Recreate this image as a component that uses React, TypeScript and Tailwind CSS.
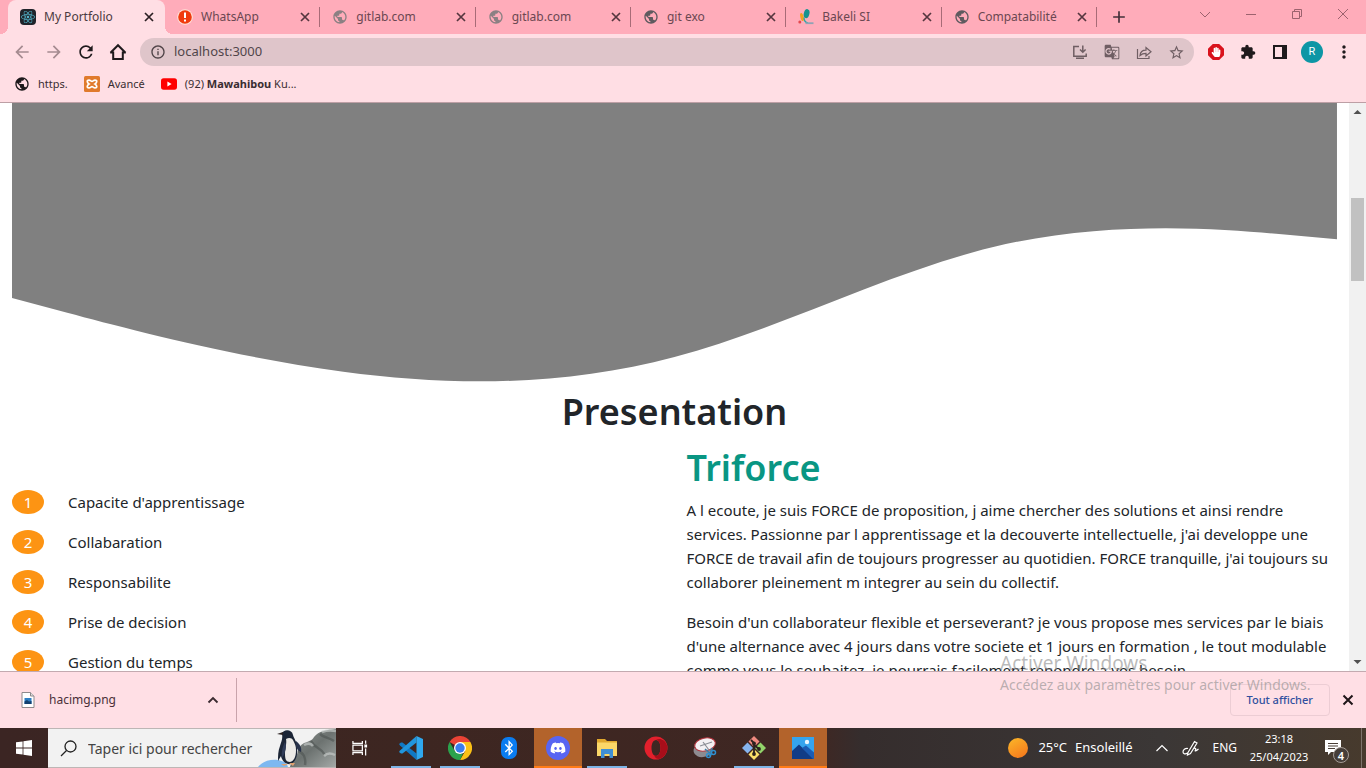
import type { ReactNode } from "react";
import {
  MdArrowBack,
  MdArrowForward,
  MdRefresh,
  MdPublic,
  MdExtension,
  MdGTranslate,
  MdStarBorder,
  MdAdd,
  MdInfoOutline,
  MdMoreVert,
} from "react-icons/md";
import { FaReact, FaDiscord, FaBluetoothB, FaHandPaper } from "react-icons/fa";

type Tab = { title: string; icon: ReactNode };

function CloseIcon() {
  return (
    <svg viewBox="0 0 10 10" className="size-2.5" fill="none" stroke="currentColor" strokeWidth="1.700">
      <path d="M1 1l8 8M9 1L1 9" />
    </svg>
  );
}

function BakeliIcon() {
  return (
    <svg viewBox="0 0 16 16" className="size-4">
      <ellipse cx="8.600" cy="4.600" rx="2.800" ry="4.600" transform="rotate(14 8.600 4.600)" fill="#17938f" />
      <ellipse cx="4" cy="8" rx="1.600" ry="4.200" transform="rotate(-14 4 8)" fill="#f7a01f" />
      <circle cx="1.800" cy="13" r="1.500" fill="#e5484d" />
      <path d="M6 8.500c0 3 1.500 5 4 5.500" fill="none" stroke="#2aa7a3" strokeWidth="1.300" />
      <path d="M7.500 13.300h8v1.800h-8z" fill="#8fa3b5" />
    </svg>
  );
}

function AlertIcon() {
  return (
    <svg viewBox="0 0 16 16" className="size-4">
      <circle cx="8" cy="8" r="7.800" fill="#ffe3d8" />
      <circle cx="8" cy="8" r="6.800" fill="#f03a0e" />
      <path d="M7 3.500h2v5.500H7zM7 10.500h2v2H7z" fill="#fff" />
    </svg>
  );
}

const tabs: Tab[] = [
  { title: "WhatsApp", icon: <AlertIcon /> },
  { title: "gitlab.com", icon: <MdPublic className="size-4 text-[#8b8083]" /> },
  { title: "gitlab.com", icon: <MdPublic className="size-4 text-[#8b8083]" /> },
  { title: "git exo", icon: <MdPublic className="size-4 text-[#5f5a5f]" /> },
  { title: "Bakeli SI", icon: <BakeliIcon /> },
  { title: "Compatabilité", icon: <MdPublic className="size-4 text-[#5f5a5f]" /> },
];

function TabStrip() {
  return (
    <div className="flex h-[34px] shrink-0 bg-[#ffacba] pl-2">
      <div className="relative flex w-[157px] items-center rounded-t-lg bg-[#ffdee4] pr-2 pl-3">
        <span className="absolute bottom-0 -left-2 size-2 bg-[radial-gradient(circle_at_0_0,#ffacba_8px,#ffdee4_8px)]" />
        <span className="absolute -right-2 bottom-0 size-2 bg-[radial-gradient(circle_at_100%_0,#ffacba_8px,#ffdee4_8px)]" />
        <span className="flex size-4 items-center justify-center rounded-sm bg-[#20232a]">
          <FaReact className="size-3.5 text-[#53b4cb]" />
        </span>
        <button className="flex-1 pl-2 text-left text-[#4b3a40]">My Portfolio</button>
        <button aria-label="Fermer" className="flex size-4 items-center justify-center text-[#2b1f23]">
          <CloseIcon />
        </button>
      </div>
      <div className="flex max-w-[932px] flex-1 items-center">
        {tabs.map((tab, i) => (
          <div key={i} className="flex h-5 min-w-0 flex-1 items-center border-r border-[#a86b77] pr-[6px] pl-3">
            <span className="size-4 shrink-0">{tab.icon}</span>
            <button className="min-w-0 flex-1 truncate pl-2 text-left text-[#6b4751]">{tab.title}</button>
            <button aria-label="Fermer" className="flex size-4 items-center justify-center text-[#55363f]">
              <CloseIcon />
            </button>
          </div>
        ))}
      </div>
      <button aria-label="Nouvel onglet" className="ml-3 text-[#43303a]">
        <MdAdd className="size-5" />
      </button>
      <div className="ml-auto flex h-7 text-[#9c626e]">
        {[
          "M1 4l5 5 5-5",
          "M1 6.500h10",
          "M1.500 3.500h7v7h-7zM3.500 3.500v-2h7v7h-2",
          "M1 1l10 10M11 1L1 11",
        ].map((d, i) => (
          <button key={i} aria-label={["Rechercher", "Réduire", "Agrandir", "Fermer"][i]} className="flex w-[46px] items-center justify-center">
            <svg viewBox="0 0 12 12" className="size-3" fill="none" stroke="currentColor">
              <path d={d} />
            </svg>
          </button>
        ))}
      </div>
    </div>
  );
}

function ToolButton({ label, children }: { label: string; children: ReactNode }) {
  return (
    <button aria-label={label} className="flex w-8 shrink-0 items-center justify-center">
      {children}
    </button>
  );
}

function Toolbar() {
  return (
    <div className="flex h-9 shrink-0 items-stretch px-[6px]">
      <div className="flex text-[#a58b90]">
        <ToolButton label="Précédent"><MdArrowBack className="size-5" /></ToolButton>
        <ToolButton label="Suivant"><MdArrowForward className="size-5" /></ToolButton>
      </div>
      <div className="flex text-[#1f1a1c]">
        <ToolButton label="Actualiser"><MdRefresh className="size-5" /></ToolButton>
        <ToolButton label="Accueil">
          <svg viewBox="0 0 18 18" className="size-[18px]" fill="none" stroke="currentColor" strokeWidth="2">
            <path d="M1.500 9.800L9 2.200l7.500 7.600M1.200 9.500H4.200V16h9.600V9.500h3" />
          </svg>
        </ToolButton>
      </div>
      <div className="my-1 mr-[6px] ml-[6px] flex min-w-0 flex-1 items-center rounded-full bg-[#dfc5ca] pr-[2px] pl-[10px] text-[#6f5e63]">
        <MdInfoOutline className="size-4 shrink-0 text-[#4f4347]" />
        <input aria-label="Adresse" defaultValue="localhost:3000" className="min-w-0 flex-1 bg-transparent pl-2 text-[13px] text-[#51454a] outline-none" />
        <ToolButton label="Installer">
          <svg viewBox="0 0 16 16" className="size-4" fill="none" stroke="currentColor" strokeWidth="1.500">
            <path d="M7 2.500H1.800v9.700h12.400V9.500M4 14.200h8M10.800 1.500v6.500M8 5.500l2.800 2.800 2.800-2.800" />
          </svg>
        </ToolButton>
        <ToolButton label="Traduire"><MdGTranslate className="size-4" /></ToolButton>
        <ToolButton label="Partager">
          <svg viewBox="0 0 16 16" className="size-4" fill="none" stroke="currentColor" strokeWidth="1.200">
            <path d="M1.500 5v9.500h11.500v-2.500M4 11.500c.3-3.500 2.500-5.300 6-5.300V3.500l5 4.300-5 4.200V9.300C7.300 9.300 5.500 10 4 11.500z" />
          </svg>
        </ToolButton>
        <ToolButton label="Favori"><MdStarBorder className="size-[17px]" /></ToolButton>
      </div>
      <div className="flex text-[#1f1a1c]">
        <ToolButton label="Bloqueur">
          <span className="flex size-4 items-center justify-center bg-[#d9121c] [clip-path:polygon(30%_0,70%_0,100%_30%,100%_70%,70%_100%,30%_100%,0_70%,0_30%)]">
            <FaHandPaper className="size-2.5 text-white" />
          </span>
        </ToolButton>
        <ToolButton label="Extensions"><MdExtension className="size-4" /></ToolButton>
        <ToolButton label="Panneau latéral">
          <svg viewBox="0 0 14 14" className="size-3.5">
            <path fillRule="evenodd" d="M0 0h14v14H0zM2 2v10h7V2z" fill="currentColor" />
          </svg>
        </ToolButton>
        <ToolButton label="Profil">
          <span className="flex size-[22px] items-center justify-center rounded-full bg-[#0d96a5] font-[Roboto] text-[11px] text-white">R</span>
        </ToolButton>
        <ToolButton label="Menu"><MdMoreVert className="size-5" /></ToolButton>
      </div>
    </div>
  );
}

function Bookmarks() {
  return (
    <nav className="flex h-[33px] shrink-0 items-center gap-4 border-b border-[#bd9fa5] pb-1 pl-[14px] text-[11px] text-[#3a2d31]">
      <a href="#https" className="flex items-center gap-2">
        <MdPublic className="size-4 text-[#1d191b]" />
        https.
      </a>
      <a href="#avance" className="flex items-center gap-2">
        <svg viewBox="0 0 16 16" className="size-4">
          <rect width="16" height="16" rx="1.500" fill="#e07a2c" />
          <path d="M5 4.200c-3 0-1.500 3 0 3.800-1.500.8-3 3.800 0 3.800 1.600 0 2-1.200 3-1.200s1.400 1.200 3 1.200c3 0 1.500-3 0-3.800 1.500-.8 3-3.800 0-3.800-1.600 0-2 1.200-3 1.200S6.600 4.200 5 4.200z" fill="none" stroke="#fff" strokeWidth="1.700" />
        </svg>
        Avancé
      </a>
      <a href="#youtube" className="flex items-center gap-2">
        <svg viewBox="0 0 16 16" className="size-4">
          <rect y="2.300" width="16" height="11.400" rx="2.600" fill="#f00" />
          <path d="M6.400 5.600v4.800L10.600 8z" fill="#fff" />
        </svg>
        <span>(92) <b>Mawahibou</b> Ku...</span>
      </a>
    </nav>
  );
}

const skills = ["Capacite d'apprentissage", "Collabaration", "Responsabilite", "Prise de decision", "Gestion du temps"];

function Portfolio() {
  return (
    <main className="h-full min-w-0 flex-1 overflow-hidden bg-white px-3 text-[15px] leading-6 text-[#212529]">
      <svg viewBox="0 12 1440 308" className="block w-full">
        <path
          fill="#808080"
          d="M0,224L60,240C120,256,240,288,360,304C480,320,600,320,720,288C840,256,960,192,1080,165.300C1200,139,1320,149,1380,154.700L1440,160L1440,0L0,0Z"
        />
      </svg>
      <h1 className="mb-1 text-center text-[36px] leading-[52px] font-semibold">Presentation</h1>
      <div className="grid grid-cols-2 gap-6">
        <ul className="mt-12">
          {skills.map((skill, i) => (
            <li key={skill} className="mb-4 flex gap-6">
              <span className="w-8 rounded-[50%] bg-[#fd9413] text-center text-white">{i + 1}</span>
              {skill}
            </li>
          ))}
        </ul>
        <section>
          <h2 className="mb-1 text-[36px] leading-[52px] font-semibold text-[#099683]">Triforce</h2>
          <p className="mb-4">
            A l ecoute, je suis FORCE de proposition, j aime chercher des solutions et ainsi rendre services. Passionne par l apprentissage et la decouverte intellectuelle, j'ai developpe une FORCE de travail afin de toujours progresser au quotidien. FORCE tranquille, j'ai toujours su collaborer pleinement m integrer au sein du collectif.
          </p>
          <p>
            Besoin d'un collaborateur flexible et perseverant? je vous propose mes services par le biais d'une alternance avec 4 jours dans votre societe et 1 jours en formation , le tout modulable comme vous le souhaitez, je pourrais facilement repondre a vos besoin.
          </p>
        </section>
      </div>
    </main>
  );
}

function Scrollbar() {
  return (
    <div className="flex w-[17px] shrink-0 flex-col items-center bg-[#f1f1f1] text-[#505050]">
      <svg viewBox="0 0 17 17" className="size-[17px]"><path d="M4.500 11h8l-4-4z" fill="currentColor" /></svg>
      <div className="flex w-[13px] flex-1 flex-col pt-[78px]">
        <div className="h-[83px] bg-[#c1c1c1]" />
      </div>
      <svg viewBox="0 0 17 17" className="size-[17px]"><path d="M4.500 6h8l-4 4z" fill="currentColor" /></svg>
    </div>
  );
}

function DownloadBar() {
  return (
    <div className="flex h-[57px] shrink-0 items-center border-t border-[#c3aab0] bg-[#ffdfe5] pr-3 pl-5">
      <svg viewBox="0 0 14 16" className="size-4">
        <path d="M1 .5h8.500L13 4v11.500H1z" fill="#fff" stroke="#8f8a8c" />
        <path d="M9.500.5V4H13" fill="#ddd" stroke="#8f8a8c" />
        <path d="M3.500 6h7v6h-7z" fill="#2d7fc4" />
        <path d="M3.500 12V9.500L6 8l2 1.500L10.500 9v3z" fill="#12406f" />
      </svg>
      <button className="ml-[13px] w-[158px] text-left text-[12px] text-[#4a3038]">hacimg.png</button>
      <button aria-label="Options" className="mr-[17px] text-[#3a2a2f]">
        <svg viewBox="0 0 12 12" className="size-3" fill="none" stroke="currentColor" strokeWidth="1.800"><path d="M1.500 8.500L6 4l4.500 4.500" /></svg>
      </button>
      <span className="h-11 w-px bg-[#c9a3ab]" />
      <button className="ml-auto h-8 rounded border border-[#eccdd4] px-4 text-[11px] font-medium text-[#31509f]">Tout afficher</button>
      <button aria-label="Fermer" className="ml-3 text-[#1f1518]">
        <svg viewBox="0 0 12 12" className="size-3" fill="none" stroke="currentColor" strokeWidth="2">
          <path d="M1.500 1.500l9 9M10.500 1.500l-9 9" />
        </svg>
      </button>
    </div>
  );
}

function Penguin() {
  return (
    <svg viewBox="0 0 78 38" className="h-full w-[78px] shrink-0">
      <defs>
        <linearGradient id="rock" x1="0" y1="0" x2="1" y2="1">
          <stop offset="0" stopColor="#8f9492" />
          <stop offset=".5" stopColor="#6c7270" />
          <stop offset="1" stopColor="#a4a9a7" />
        </linearGradient>
      </defs>
      <path d="M32 38c2-10 8-10 8-17 4-10 12-6 16-13 5-6 12-7 22-8v38z" fill="url(#rock)" />
      <path d="M40 22c6 2 8 8 7 14M53 12c4 8 10 6 14 14M62 5c4 4 8 3 14 7" fill="none" stroke="#454b49" strokeWidth="2.500" opacity=".5" />
      <path d="M46 16c4-2 7-2 9 1M66 27c3-3 7-3 11-1M64 3c5-2 9-2 14-1" fill="none" stroke="#c3c8c6" strokeWidth="2.500" opacity=".7" />
      <path d="M0 38c4-5 11-8 20-7 5 1 9 3 10 7z" fill="#7db8f0" />
      <path d="M24 5c1-5 10-5 11 1 1 4 4 6 4 13 1 9-2 14-6 16-5 1-9-3-10-8l-3 5c0-5 0-10 2-15 1-4 3-7 2-12z" fill="#1c2536" />
      <path d="M28 10c3-2 6-1 7 1 2 4 3 6 3 10 0 7-2 11-6 12-4 0-5-3-5-8 0-6 2-10 1-15z" fill="#eceae6" />
      <path d="M27 13c-2 4-4 9-3 16 2-3 4-8 4-12z" fill="#303c57" />
      <path d="M38 12c4 3 6 7 5 11-3-1-4-3-5-6z" fill="#28324a" />
      <path d="M19 5l6-2v3z" fill="#2a2020" />
      <path d="M23 35h7l-4 2zM31 34h6l-2 3z" fill="#e0a070" />
    </svg>
  );
}

type TaskApp = { name: string; active?: boolean; running?: boolean; icon: ReactNode };

const apps: TaskApp[] = [
  {
    name: "Visual Studio Code",
    running: true,
    icon: (
      <svg viewBox="0 0 24 24" className="size-6">
        <path d="M17.500 24L1 9.500 0 8l2-1.600 1.500.1L17.500 17.500z" fill="#1079c4" />
        <path d="M17.500 6.500L3.500 17.500l-1.500.1L0 16l1-1.500L17.500 0z" fill="#2196dd" />
        <path d="M17.500 0L24 3v18l-6.500 3z" fill="#2fa8ee" />
      </svg>
    ),
  },
  {
    name: "Chrome",
    running: true,
    icon: (
      <svg viewBox="0 0 24 24" className="size-6">
        <path d="M12 12L1.600 6A12 12 0 0 1 22.400 6z" fill="#ea4335" />
        <path d="M12 12V6h10.400A12 12 0 0 1 12 24l5.200-9z" fill="#fbc116" />
        <path d="M1.600 6l5.200 9 5.200 3 3-.500L12 24A12 12 0 0 1 1.600 6z" fill="#2ba24c" />
        <circle cx="12" cy="12" r="6" fill="#fff" />
        <circle cx="12" cy="12" r="4.700" fill="#3b7ded" />
      </svg>
    ),
  },
  {
    name: "Bluetooth",
    icon: (
      <span className="flex h-[22px] w-4 items-center justify-center rounded-[7px] bg-[#0a7cf0]">
        <FaBluetoothB className="size-4 text-white" />
      </span>
    ),
  },
  {
    name: "Discord",
    active: true,
    icon: (
      <span className="flex size-6 items-center justify-center rounded-full bg-[#5865f2]">
        <FaDiscord className="size-4 text-white" />
      </span>
    ),
  },
  {
    name: "Explorateur",
    running: true,
    icon: (
      <svg viewBox="0 0 24 24" className="size-6">
        <path d="M2 3h8l2 2h10v15H2z" fill="#e0a82e" />
        <path d="M2 6.500h20V20H2z" fill="#fbd768" />
        <path d="M6 13h12v9h-3.500v-4h-5v4H6z" fill="#3f8fd4" />
      </svg>
    ),
  },
  {
    name: "Opera",
    icon: (
      <svg viewBox="0 0 24 24" className="size-6">
        <path fillRule="evenodd" d="M12 .500a11.500 11.500 0 1 0 0 23 11.500 11.500 0 1 0 0-23zM12 4c2.600 0 4.500 3.600 4.500 8s-1.900 8-4.500 8-4.500-3.600-4.500-8S9.400 4 12 4z" fill="#e2202c" />
        <path d="M12 4c3-2 9-1 11.300 6 .8 6-3.300 12-8.300 13-2 0-4-1-5-4 4 2.500 6.500-1.500 6.500-7S14.500 4 12 4z" fill="#a70e1a" />
      </svg>
    ),
  },
  {
    name: "Outil Capture",
    icon: (
      <svg viewBox="0 0 24 24" className="size-6">
        <ellipse cx="10" cy="11" rx="9.500" ry="7" fill="#8d8b90" transform="translate(0 3) rotate(-12 10 11)" />
        <ellipse cx="12" cy="8.500" rx="10.500" ry="6.500" transform="rotate(-12 12 8.500)" fill="#f3f1f3" stroke="#b3323c" />
        <path d="M7 10l12-4M10 6l6 8" stroke="#8b8f96" strokeWidth="1.200" />
        <path d="M12 13l7 6M19 12l-3 8" stroke="#3d7ea6" strokeWidth="1.500" />
        <circle cx="15.500" cy="19.500" r="2" fill="none" stroke="#2f8fd0" strokeWidth="1.500" />
        <circle cx="20.500" cy="16.500" r="2" fill="none" stroke="#2f8fd0" strokeWidth="1.500" />
      </svg>
    ),
  },
  {
    name: "Git Bash",
    running: true,
    icon: (
      <svg viewBox="0 0 24 24" className="size-6">
        <path d="M12 0l5.500 5.500L12 11 6.500 5.500z" fill="#f08a80" />
        <path d="M18.500 6.500L24 12l-5.500 5.500L13 12z" fill="#93d46a" />
        <path d="M12 13l5.500 5.500L12 24l-5.500-5.500z" fill="#fbe06a" />
        <path d="M5.500 6.500L11 12l-5.500 5.500L0 12z" fill="#86b4ee" />
        <path d="M9 4l3 3v11M12 9l5 4" fill="none" stroke="#2b211f" strokeWidth="1.800" />
        <circle cx="12" cy="7.500" r="1.900" fill="#2b211f" />
        <circle cx="12" cy="18" r="1.900" fill="#2b211f" />
        <circle cx="17" cy="13" r="1.900" fill="#2b211f" />
      </svg>
    ),
  },
  {
    name: "Photos",
    active: true,
    icon: (
      <svg viewBox="0 0 22 22" className="size-[22px]">
        <path d="M0 0h22v22H0z" fill="#35a4ee" />
        <path d="M0 14l7-6.500L22 22H0z" fill="#123c86" />
        <path d="M10 11l4-2.500 8 7V22h-1z" fill="#1b5cb4" />
        <circle cx="15" cy="5" r="2.200" fill="#eaf6ff" />
      </svg>
    ),
  },
];

function Taskbar() {
  return (
    <footer className="flex h-10 shrink-0 bg-[linear-gradient(90deg,#3b2523_0%,#3d2621_30%,#3f2723_60%,#352d2d_63%,#3b3736_85%,#473a2d_100%)] text-white">
      <button aria-label="Démarrer" className="flex w-12 items-center justify-center">
        <svg viewBox="0 0 16 16" className="size-4" fill="#fff">
          <path d="M0 2.300l6.600-.9v6.200H0zM7.400 1.300L16 0v7.600H7.400zM0 8.400h6.600v6.200L0 13.700zM7.400 8.400H16V16l-8.600-1.200z" />
        </svg>
      </button>
      <div className="flex w-[288px] items-center border-y border-[#bdb6b5] bg-[#f2f2f2] pl-3">
        <svg viewBox="0 0 17 17" className="size-[17px] shrink-0" fill="none" stroke="#222" strokeWidth="1.300">
          <circle cx="10.500" cy="6.500" r="5.500" />
          <path d="M6.500 10.500L1 16" />
        </svg>
        <input aria-label="Rechercher" placeholder="Taper ici pour rechercher" className="min-w-0 flex-1 bg-transparent pl-[11px] text-[14px] text-[#444] outline-none placeholder:text-[#444]" />
        <Penguin />
      </div>
      <button aria-label="Affichage des tâches" className="flex w-12 items-center justify-center">
        <svg viewBox="0 0 17 16" className="size-4" fill="none" stroke="#fff" strokeWidth="1.300">
          <path d="M1 .5v2.500h10V.5M1 15.500V13h10v2.500M1 5h10v6H1zM14.500 0v3.500M14.500 8.500V16" />
          <path d="M13.800 5h1.600v1.800h-1.600z" fill="#fff" />
        </svg>
      </button>
      <div className="ml-[3px] flex gap-px">
        {apps.map((app) => (
          <button key={app.name} aria-label={app.name} className={app.active ? "flex w-12 flex-col items-center bg-[#b3632b]" : "flex w-12 flex-col items-center"}>
            <span className="flex flex-1 items-center justify-center pt-[2px]">{app.icon}</span>
            <span className={app.active ? "h-[2px] w-full bg-[#ff7b16]" : app.running ? "h-[2px] w-10 bg-[#7db4e6]" : "h-[2px]"} />
          </button>
        ))}
      </div>
      <div className="ml-auto flex items-center">
        <button className="flex items-center text-[13px]">
          <span className="mr-[10px] size-5 rounded-full bg-[linear-gradient(150deg,#fbb829,#f5731b)]" />
          25°C
          <span className="ml-2">Ensoleillé</span>
        </button>
        <button aria-label="Icônes cachées" className="ml-6">
          <svg viewBox="0 0 12 12" className="size-3" fill="none" stroke="#fff" strokeWidth="1.200"><path d="M.500 9L6 3.500 11.500 9" /></svg>
        </button>
        <button aria-label="Stylet" className="ml-[14px]">
          <svg viewBox="0 0 18 16" className="h-4 w-[18px]" fill="none" stroke="#fff" strokeWidth="1.200">
            <path d="M6 12.500L12.500 1.500l2.500 1.500L8.500 13.500 5.500 15zM6 8.500c-3-.5-5 1.500-5 3.500s2.500 2.500 4.500 1M11 9c2-1.500 3.500-.5 2.500 1s0 1.500 3-1" />
          </svg>
        </button>
        <button className="ml-3 text-[12px]">ENG</button>
        <button className="ml-3 flex w-[60px] flex-col items-center text-[11px] leading-[18px]">
          <span>23:18</span>
          <span>25/04/2023</span>
        </button>
        <button aria-label="Notifications" className="relative mr-3 ml-4 size-6">
          <svg viewBox="0 0 18 16" className="h-4 w-[18px]">
            <path d="M0 0h16v12H6l-3 3v-3H0z" fill="#fff" />
            <path d="M3 3.500h10M3 6h10M3 8.500h7" stroke="#4a3f37" />
          </svg>
          <span className="absolute right-0 -bottom-[3px] flex size-4 items-center justify-center rounded-full border border-[#a59c96] bg-[#453d38] text-[11px] leading-none font-semibold">4</span>
        </button>
        <span className="mr-1 h-10 w-px bg-[#7d736b]" />
      </div>
    </footer>
  );
}

export default function App() {
  return (
    <div className="relative flex h-screen flex-col overflow-hidden bg-[#ffdee4] font-['Noto_Sans','Open_Sans',sans-serif] text-[12px]">
      <TabStrip />
      <Toolbar />
      <Bookmarks />
      <div className="flex min-h-0 flex-1">
        <Portfolio />
        <Scrollbar />
      </div>
      <DownloadBar />
      <Taskbar />
      <div className="pointer-events-none absolute right-[52px] bottom-[73px] w-[314px] whitespace-nowrap text-[#8c8c8c]/60">
        <p className="text-[19px] leading-6">Activer Windows</p>
        <p className="text-[14px] leading-5">Accédez aux paramètres pour activer Windows.</p>
      </div>
    </div>
  );
}
